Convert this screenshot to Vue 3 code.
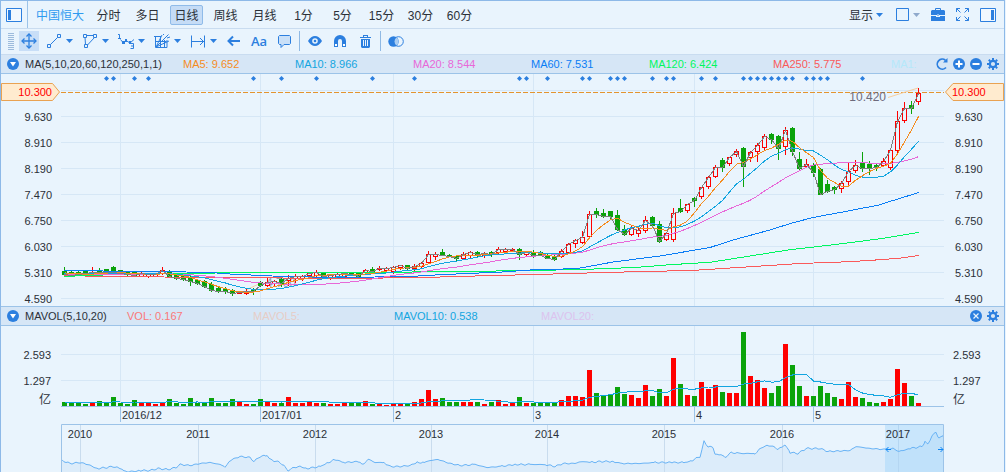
<script setup>
const periods = ['分时', '多日', '日线', '周线', '月线', '1分', '5分', '15分', '30分', '60分']
const activePeriod = '日线'

const averages = [
  { name: 'MA5', value: '9.652', tone: 'orange' },
  { name: 'MA10', value: '8.966', tone: 'cyan' },
  { name: 'MA20', value: '8.544', tone: 'pink' },
  { name: 'MA60', value: '7.531', tone: 'blue' },
  { name: 'MA120', value: '6.424', tone: 'green' },
  { name: 'MA250', value: '5.775', tone: 'red' },
  { name: 'MA1', value: '', tone: 'pale' }
]
const volumes = [
  { name: 'VOL', value: '0.167', tone: 'coral' },
  { name: 'MAVOL5', value: '', tone: 'sand' },
  { name: 'MAVOL10', value: '0.538', tone: 'cyan' },
  { name: 'MAVOL20', value: '', tone: 'lilac' }
]

const priceTicks = ['9.630', '8.910', '8.190', '7.470', '6.750', '6.030', '5.310', '4.590']
const volumeTicks = ['2.593', '1.297']
const months = ['2016/12', '2017/01', '2', '3', '4', '5']
const monthLines = [120, 260, 393, 533, 694, 813]
const years = [
  ['2010', 80], ['2011', 198], ['2012', 315], ['2013', 431],
  ['2014', 547], ['2015', 664], ['2016', 782], ['2017', 898]
].map(([label, x]) => ({ label, x, left: ((x - 61) / 883) * 100 + '%' }))

// direction, high, body top, body bottom, low, volume height
const rows = `
g 267 271 274 274 4|g 271 272 275 275 3|g 271 272 274 274 3|g 270 271 273 273 2|r 267 272 273 273 4
g 268 270 272 273 5|g 269 269 272 272 3|g 266 267 272 272 9|g 270 270 273 274 3|g 272 272 274 275 2
g 271 272 275 276 6|r 272 273 276 276 3|r 273 274 276 277 3|r 273 274 276 276 2|r 267 270 273 274 3
g 270 271 276 277 7|g 274 275 278 279 3|g 276 276 279 280 2|g 276 277 281 285 8|g 280 280 283 284 3
g 280 281 286 287 3|g 282 284 290 291 8|g 287 288 291 292 3|g 287 289 291 293 3|g 289 290 293 295 7
r 291 292 293 293 5|r 289 291 293 294 2|g 288 289 291 294 2|g 281 282 285 286 7|r 278 282 285 286 5
r 280 281 283 286 3|g 278 279 283 286 3|r 275 278 280 285 9|r 274 276 278 282 3|r 275 276 278 280 3
r 272 273 275 277 5|r 270 272 275 276 3|g 272 273 276 277 3|r 274 275 278 279 2|r 272 274 277 278 2
r 272 273 276 276 3|g 272 273 274 275 3|g 272 273 276 278 3|r 269 270 272 273 5|g 267 269 271 272 2
r 266 268 269 270 2|r 267 268 270 271 1|r 266 267 271 273 2|r 265 265 267 269 2|g 265 265 268 269 2
r 264 266 268 270 4|r 262 263 266 268 7|r 251 254 262 263 16|r 252 254 256 259 7|g 249 252 255 255 8
g 254 255 256 256 4|g 255 256 258 260 4|r 252 254 258 259 4|r 251 252 255 257 4|g 251 252 254 256 4
r 252 253 255 257 2|g 251 252 254 256 4|r 247 249 252 253 6|r 248 249 251 252 2|r 248 249 250 251 3
g 248 249 254 259 9|r 251 252 254 256 3|g 250 252 255 257 3|g 251 252 255 255 3|g 254 255 258 258 3
g 255 256 259 260 3|r 249 251 256 257 6|r 243 244 252 253 10|r 239 240 243 247 10|r 231 237 242 243 9
r 211 214 236 237 36|g 208 211 214 217 13|g 209 213 216 217 11|g 211 211 216 218 12|g 210 215 229 230 19
g 225 229 234 235 12|r 226 228 234 235 11|r 227 230 233 236 8|r 216 220 230 232 21|g 216 217 225 226 10
g 221 224 241 242 17|r 232 233 239 240 10|r 208 213 239 241 48|g 199 208 211 212 22|r 204 204 210 212 11
g 197 198 200 206 10|r 187 187 196 198 24|r 176 177 186 188 17|r 165 167 176 177 21|g 158 160 167 171 14
r 157 157 163 165 13|r 149 151 154 156 13|g 147 148 166 186 74|r 151 152 157 161 30|r 143 145 151 161 26
r 134 136 147 149 18|g 133 134 139 143 13|g 135 136 148 159 20|r 127 130 146 154 62|g 127 128 151 155 41
g 152 159 168 169 20|r 159 164 166 167 10|g 163 165 172 176 10|g 168 169 194 194 20|g 180 184 191 192 13
g 186 187 189 193 9|r 181 183 188 192 7|r 162 171 181 185 24|r 160 165 170 172 9|g 152 162 168 171 8
g 161 164 168 174 4|g 163 165 167 170 3|r 158 161 165 166 4|r 149 150 167 169 7|r 111 121 150 153 37
r 102 108 120 122 23|g 101 105 108 113 10|r 88 93 101 104 3`
const candles = rows.trim().split(/[|\n]/).map((row, i) => {
  const [dir, ...n] = row.split(' ')
  const [high, top, bottom, low, volume] = n.map(Number)
  const rise = dir === 'r'
  return { x: 62 + 7 * i, rise, high, top, bottom, low, volume, close: rise ? top : bottom }
})

function movingAverage(values, span, seed) {
  const padded = [...Array(span - 1).fill(seed), ...values]
  return values.map((_, i) => padded.slice(i, i + span).reduce((a, b) => a + b, 0) / span)
}
const line = (values) => values.map((v, i) => `${64.5 + 7 * i},${(v + 0.5).toFixed(1)}`).join(' ')

const closes = candles.map((c) => c.close)
const priceLines = [
  { tone: 'red', points: '64,275.5 104,276.5 223,277.5 340,278.5 410,277.7 453,276.7 488,275.6 530,274.7 607,272.4 650,271.4 693,270.4 800,263.5 847,261.8 873,260.2 900,258.2 919,255.5' },
  { tone: 'green', points: '64,276.4 117,274.5 170,273.3 292,272.5 393,272.2 463,271.5 530,270.5 578,269.6 635,267.5 670,264.7 710,262.3 750,256 790,249.7 833,244.8 883,238.4 919,232.4' },
  { tone: 'blue', points: '64,270.6 150,271.5 208,272.3 230,274 283,276.5 340,277.5 410,276.5 440,274.7 502,272 530,270 577,268.6 613,262 660,256 710,247.5 733,240 770,230 790,223.6 813,217.5 840,212.5 878,205.2 919,192.4' },
  { tone: 'pink', points: line(movingAverage(closes, 20, 274)) },
  { tone: 'cyan', points: line(movingAverage(closes, 10, 273)) },
  { tone: 'orange', points: line(movingAverage(closes, 5, 272)) },
  { tone: 'gray', points: line(closes) }
]
const volumeLine = line(movingAverage(candles.map((c) => c.volume), 10, 4).map((v) => 405.5 - v))

const events = [
  106, 113, 134, 148, 253, 281, 316, 372, 414, 519, 526, 547, 582, 589, 610, 617, 624, 652, 666, 673,
  701, 715, 743, 750, 757, 764, 771, 778, 785, 792, 806, 813, 820, 827, 862
]

const history = [
  [62, 460], [70, 463], [80, 462], [88, 464], [97, 468], [107, 467], [113, 466], [120, 468], [125, 471],
  [133, 471], [140, 470], [150, 470], [158, 468], [168, 469], [176, 467], [180, 464], [190, 465], [200, 463],
  [210, 462], [220, 464], [225, 466], [232, 459], [240, 456], [250, 457], [254, 461], [260, 456], [267, 455],
  [270, 459], [280, 462], [285, 466], [288, 470], [294, 467], [300, 466], [307, 468], [320, 466], [325, 464],
  [334, 459], [345, 462], [358, 461], [362, 464], [369, 459], [375, 462], [384, 462], [390, 466], [400, 466],
  [410, 465], [417, 462], [424, 462], [430, 460], [438, 459], [450, 463], [460, 465], [475, 464], [487, 467],
  [500, 466], [515, 464], [530, 464], [545, 464], [555, 466], [563, 463], [573, 463], [583, 461], [590, 462],
  [600, 461], [613, 461], [620, 463], [640, 463], [655, 462], [672, 462], [685, 462], [692, 460], [700, 456],
  [702, 449], [704, 441], [708, 446], [713, 447], [715, 454], [722, 454], [725, 457], [731, 452], [740, 453],
  [755, 453], [763, 446], [771, 445], [778, 449], [785, 444], [790, 452], [798, 453], [806, 448], [820, 448],
  [828, 451], [850, 450], [856, 446], [870, 448], [885, 449], [893, 448], [899, 451], [910, 448], [922, 446],
  [925, 441], [928, 444], [932, 435], [936, 432], [939, 438], [944, 434]
]
const historyPoints = []
history.slice(1).forEach(([x, y], i) => {
  const [px, py] = history[i]
  for (let t = px; t < x; t += 2) {
    const wobble = Math.sin(t * 2.3) * 0.5 + Math.sin(t * 0.9) * 0.4
    historyPoints.push(`${t},${(py + ((y - py) * (t - px)) / (x - px) + wobble + 0.5).toFixed(1)}`)
  }
})
historyPoints.push('944,434')
const historyLine = historyPoints.join(' ')
const historyArea = `62,472 ${historyLine} 944,472`
</script>

<template>
  <main class="terminal">
    <header class="top-bar">
      <button class="icon" aria-label="左侧面板">
        <svg width="16" height="14"><path d="M.5 .5h15v13H.5z" fill="#fff" fill-opacity=".4" stroke="#2c7fdf" /><path d="M2 2h3v10H2z" fill="#2c7fdf" /></svg>
      </button>
      <a class="stock" href="#">中国恒大</a>
      <nav class="periods">
        <button v-for="p in periods" :key="p" :class="{ active: p === activePeriod }">{{ p }}</button>
      </nav>
      <div class="top-right">
        <button class="display">显示<svg width="7" height="4"><path d="M0 0h7L3.500 4z" fill="#2c7fdf" /></svg></button>
        <button class="layout" aria-label="布局">
          <svg width="13" height="13"><path d="M.5 .5h12v12H.5z" fill="none" stroke="#2c7fdf" /></svg>
          <svg width="7" height="4"><path d="M0 0h7L3.500 4z" fill="#8fa9cc" /></svg>
        </button>
        <button class="icon" aria-label="工具箱">
          <svg width="14" height="13"><path d="M4.500 3V.5h5V3" fill="none" stroke="#2c7fdf" /><path d="M1 2h12l1 1v4H0V3zM0 8h5v1h4V8h5v5H0z" fill="#2c7fdf" /><path d="M6 6h2v3H6z" fill="#e9f4fd" /><path d="M6.500 6h1v2h-1z" fill="#2c7fdf" /></svg>
        </button>
        <button class="icon" aria-label="全屏">
          <svg width="13" height="13" fill="none" stroke="#2c7fdf"><path d="M4 .5H.5V4M.5 .5l4 4M9 .5h3.500V4M12.500 .5l-4 4M4 12.500H.5V9M.5 12.500l4-4M9 12.500h3.500V9M12.500 12.500l-4-4" /></svg>
        </button>
        <button class="icon" aria-label="右侧面板">
          <svg width="16" height="14"><path d="M.5 .5h15v13H.5z" fill="#fff" fill-opacity=".4" stroke="#2c7fdf" /><path d="M11 2h3v10h-3z" fill="#2c7fdf" /></svg>
        </button>
      </div>
    </header>

    <div class="tools">
      <span class="grip"></span>
      <button class="tool active" aria-label="移动">
        <svg width="16" height="16" fill="none" stroke="#2c7fdf"><path d="M8 1v14M1 8h14" stroke-width="1.300" /><path d="M5.500 3.500L8 1l2.500 2.500M5.500 12.500L8 15l2.500-2.500M3.500 5.500L1 8l2.500 2.500M12.500 5.500L15 8l-2.500 2.500" stroke-width="1.300" /></svg>
      </button>
      <div class="draw-tools">
        <button class="drop" aria-label="线段">
          <svg width="20" height="16" fill="none" stroke="#2c7fdf"><path d="M3.500 11.500h3v3h-3zM13.500 1.500h3v3h-3zM6.500 11.500l7-7" /></svg>
          <svg width="7" height="4"><path d="M0 0h7L3.500 4z" fill="#2c7fdf" /></svg>
        </button>
        <button class="drop" aria-label="图形">
          <svg width="20" height="16" fill="none" stroke="#2c7fdf"><path d="M3.500 1.500h3v3h-3zM13.500 1.500h3v3h-3zM4.500 11.500h3v3h-3zM6.500 2.500h7M5 4.500l.5 7M7.500 12l7-7.500" /></svg>
          <svg width="7" height="4"><path d="M0 0h7L3.500 4z" fill="#2c7fdf" /></svg>
        </button>
        <button class="drop" aria-label="波浪">
          <svg width="20" height="16" fill="none" stroke="#2c7fdf"><path d="M2 1.500h1.500V5M2 5.500h3M14.500 10.500h3v5h-3M15 13h2.500M4.500 6.500l2.500 3 3-2 4 2.500 4-3.500" /><path d="M6 8h3v3H6zM9 6h2v3H9zM13 8h2v3h-2z" fill="#2c7fdf" stroke="none" /></svg>
          <svg width="7" height="4"><path d="M0 0h7L3.500 4z" fill="#2c7fdf" /></svg>
        </button>
        <button class="drop" aria-label="江恩">
          <svg width="20" height="16" fill="none" stroke="#2c7fdf"><path d="M3.500 3v11.500h11.500V7M2 3.500h7M3.500 8.500h11M8.500 3v11M12.500 7v7M4 14L16.500 1.500M4 14l6-12M4 14l13-6M11 2l1-1M15 5l3-1" /></svg>
          <svg width="7" height="4"><path d="M0 0h7L3.500 4z" fill="#2c7fdf" /></svg>
        </button>
        <button class="drop" aria-label="测量">
          <svg width="20" height="16" fill="none" stroke="#2c7fdf"><path d="M3.500 2.500v12M16.500 2.500v12M4 8.500h12M12 5l3.500 3.500L12 12" /></svg>
          <svg width="7" height="4"><path d="M0 0h7L3.500 4z" fill="#2c7fdf" /></svg>
        </button>
        <button class="tool" aria-label="箭头">
          <svg width="14" height="12" fill="none" stroke="#2c7fdf" stroke-width="2"><path d="M13 6H2M6 1.500L1.500 6 6 10.500" /></svg>
        </button>
      </div>
      <button class="tool text">Aa</button>
      <button class="tool" aria-label="批注">
        <svg width="13" height="13"><path d="M1.500 .5h10l1 1v7l-1 1H6l-3 3v-3H1.500l-1-1v-7z" fill="#c9e0f8" stroke="#2c7fdf" /></svg>
      </button>
      <i class="divider"></i>
      <button class="tool" aria-label="可见">
        <svg width="14" height="10"><path d="M0 5Q3 0 7 0t7 5q-3 5-7 5T0 5z" fill="#2c7fdf" /><circle cx="7" cy="5" r="2.800" fill="#e9f4fd" /><circle cx="7" cy="5" r="1.300" fill="#2c7fdf" /></svg>
      </button>
      <button class="tool" aria-label="磁吸">
        <svg width="12" height="12"><path d="M2 12V6a4 4 0 0 1 8 0v6" fill="none" stroke="#2c7fdf" stroke-width="4" /><path d="M1 9h2v2H1zM9 9h2v2H9z" fill="#fff" /></svg>
      </button>
      <button class="tool" aria-label="删除">
        <svg width="11" height="13"><path d="M0 2h11v1H0zM3 0h5v2H7V1H4v1H3zM1 4h9v8l-1 1H2l-1-1z" fill="#2c7fdf" /><path d="M3.500 5v6M5.500 5v6M7.500 5v6" stroke="#e9f4fd" /></svg>
      </button>
      <i class="divider"></i>
      <button class="tool" aria-label="对比">
        <svg width="16" height="11"><circle cx="10.500" cy="5.500" r="4.800" fill="none" stroke="#2c7fdf" /><circle cx="5.500" cy="5.500" r="5.200" fill="#2c7fdf" /><path d="M8.500 1.500a5 5 0 0 0 0 8a5 5 0 0 0 0-8" fill="#a9cdf3" /></svg>
      </button>
    </div>

    <section class="indicator price-head">
      <button class="fold" aria-label="折叠">
        <svg width="12" height="12"><circle cx="6" cy="6" r="6" fill="#2c7fdf" /><path d="M3 4h6L6 8.500z" fill="#fff" /></svg>
      </button>
      <h2>MA(5,10,20,60,120,250,1,1)</h2>
      <span v-for="a in averages" :key="a.name" :class="a.tone">{{ a.name }}: {{ a.value }}</span>
      <div class="actions">
        <button aria-label="刷新"><svg width="12" height="12"><path d="M10 9.500A5 5 0 1 1 9.500 2.300" fill="none" stroke="#2c7fdf" stroke-width="1.700" /><path d="M7 4.500h4.500V0z" fill="#2c7fdf" /></svg></button>
        <button aria-label="放大"><svg width="12" height="12"><circle cx="6" cy="6" r="6" fill="#2c7fdf" /><path d="M6 2.500v7M2.500 6h7" stroke="#fff" stroke-width="2" /></svg></button>
        <button aria-label="缩小"><svg width="12" height="12"><circle cx="6" cy="6" r="6" fill="#2c7fdf" /><path d="M2.500 6h7" stroke="#fff" stroke-width="2" /></svg></button>
        <button aria-label="设置"><svg width="12" height="12" fill="none" stroke="#2c7fdf"><circle cx="6" cy="6" r="3.200" stroke-width="2.200" /><path d="M6 0v2M6 10v2M0 6h2M10 6h2M1.800 1.800l1.400 1.400M8.800 8.800l1.400 1.400M1.800 10.200l1.400-1.400M8.800 3.200l1.400-1.400" stroke-width="2" /></svg></button>
      </div>
    </section>

    <section class="chart">
      <div class="axis left prices">
        <div class="tag">
          <svg viewBox="0 0 60 18"><path d="M.5 .5h51l7 8.500-7 8.500H.5z" fill="#ffebcf" stroke="#e9a252" /></svg>
          <span>10.300</span>
        </div>
        <span v-for="t in priceTicks" :key="t">{{ t }}</span>
      </div>
      <div class="plot price">
        <span class="mark low">4.700</span>
        <svg viewBox="61 74 883 232" preserveAspectRatio="none">
          <g class="grid">
            <path v-for="n in 9" :key="n" :d="`M61 ${64.5 + 26 * n}H944`" />
            <path v-for="x in monthLines" :key="x" :d="`M${x + 0.5} 74V306`" />
          </g>
          <path v-for="x in events" :key="x" :d="`M${x + 0.5} 76l2.500 2.500-2.500 2.500-2.500-2.500z`" fill="#2c7fdf" />
          <path d="M61 92.500H944" stroke="#e3942f" stroke-dasharray="5 2" class="crisp" />
          <path d="M888 97.500L918 88M247 289.500L261 283" stroke="#f6cf9f" fill="none" />
          <g v-for="c in candles" :key="c.x" class="crisp">
            <template v-if="c.rise">
              <path :d="`M${c.x + 2.5} ${c.high}V${c.top}M${c.x + 2.5} ${c.bottom}V${c.low + 1}`" stroke="#f00" />
              <path :d="`M${c.x + 0.5} ${c.top + 0.5}h4V${c.bottom + 0.5}h-4z`" fill="#e9f4fd" stroke="#f00" />
            </template>
            <template v-else>
              <path :d="`M${c.x + 2.5} ${c.high}V${c.low + 1}`" stroke="#0ba30b" />
              <path :d="`M${c.x} ${c.top}h5V${c.bottom + 1}h-5z`" fill="#0ba30b" />
            </template>
          </g>
          <polyline v-for="l in priceLines" :key="l.tone" :points="l.points" class="trend" :class="l.tone" />
        </svg>
        <span class="mark peak">10.420</span>
      </div>
      <div class="axis right prices">
        <div class="tag">
          <svg viewBox="0 0 60 18"><path d="M59.500 .5H9L1.500 9 9 17.500h50.500z" fill="#ffebcf" stroke="#e9a252" /></svg>
          <span>10.300</span>
        </div>
        <span v-for="t in priceTicks" :key="t">{{ t }}</span>
      </div>
    </section>

    <section class="indicator volume-head">
      <button class="fold" aria-label="折叠">
        <svg width="12" height="12"><circle cx="6" cy="6" r="6" fill="#2c7fdf" /><path d="M3 4h6L6 8.500z" fill="#fff" /></svg>
      </button>
      <h2>MAVOL(5,10,20)</h2>
      <span v-for="v in volumes" :key="v.name" :class="v.tone">{{ v.name }}: {{ v.value }}</span>
      <div class="actions">
        <button aria-label="关闭"><svg width="12" height="12"><circle cx="6" cy="6" r="6" fill="#2c7fdf" /><path d="M3.500 3.500l5 5M8.500 3.500l-5 5" stroke="#e9f4fd" stroke-width="1.200" /></svg></button>
        <button aria-label="设置"><svg width="12" height="12" fill="none" stroke="#2c7fdf"><circle cx="6" cy="6" r="3.200" stroke-width="2.200" /><path d="M6 0v2M6 10v2M0 6h2M10 6h2M1.800 1.800l1.400 1.400M8.800 8.800l1.400 1.400M1.800 10.200l1.400-1.400M8.800 3.200l1.400-1.400" stroke-width="2" /></svg></button>
      </div>
    </section>

    <section class="chart">
      <div class="axis left volume">
        <span v-for="t in volumeTicks" :key="t">{{ t }}</span>
        <span class="unit">亿</span>
      </div>
      <div class="plot">
        <svg class="bars" viewBox="61 326 883 81" preserveAspectRatio="none">
          <g class="grid">
            <path d="M61 354.500H944M61 380.500H944" />
            <path v-for="x in monthLines" :key="x" :d="`M${x + 0.5} 326V406`" />
          </g>
          <rect v-for="c in candles" :key="c.x" :x="c.x" :y="406 - c.volume" width="5" :height="c.volume" :fill="c.rise ? '#f00' : '#0ba30b'" />
          <polyline :points="volumeLine" class="trend cyan" />
          <path d="M61 406.500H944" stroke="#9cc3e8" />
        </svg>
        <div class="months">
          <span v-for="m in months" :key="m">{{ m }}</span>
        </div>
        <div class="navigator">
          <svg viewBox="61 424 883 48" preserveAspectRatio="none">
            <polygon :points="historyArea" fill="#dcecfa" />
            <path v-for="y in years" :key="y.x" :d="`M${y.x + 0.5} 425V472`" stroke="#c9dcee" />
            <rect x="885" y="425" width="59" height="47" fill="#8fccfa" fill-opacity=".36" />
            <polyline :points="historyLine" fill="none" stroke="#69b3f5" />
            <path d="M61.500 472V424.500H943.500V472" fill="none" stroke="#9cc3e8" />
            <path d="M891 449.500h-5M888.500 447l-2.500 2.500 2.500 2.500M938 449.500h5M940.500 447l2.500 2.500-2.500 2.500" fill="none" stroke="#1087f5" />
          </svg>
          <span v-for="y in years" :key="y.label" :style="{ left: y.left }">{{ y.label }}</span>
        </div>
      </div>
      <div class="axis right volume">
        <span v-for="t in volumeTicks" :key="t">{{ t }}</span>
        <span class="unit">亿</span>
      </div>
    </section>
  </main>
</template>

<style>
body {
  background: #e9f4fd;
}
</style>

<style scoped>
.terminal {
  margin-right: 1px;
  border: 1px solid #8db9e8;
  border-bottom: 0;
  background: #e9f4fd;
  color: #2b3038;
  font-family: "Liberation Sans", "Noto Sans CJK SC", sans-serif;
  font-size: 11px;
  overflow: hidden;
}
button {
  display: flex;
  align-items: center;
  justify-content: center;
  margin: 0;
  padding: 0;
  border: 0;
  background: none;
  color: inherit;
  font: inherit;
}
svg {
  display: block;
}
.top-bar {
  display: flex;
  height: 27px;
  align-items: center;
  padding: 0 8px 0 5px;
  border-bottom: 1px solid #c9dcf0;
  font-size: 12px;
}
.stock {
  display: flex;
  height: 27px;
  align-items: center;
  margin-left: 5px;
  padding: 0 8px;
  border-left: 1px solid #9cc3e8;
  color: #2f9af0;
  text-decoration: none;
}
.periods {
  display: flex;
  gap: 6px;
}
.periods button {
  box-sizing: border-box;
  width: 33px;
  height: 20px;
  border: 1px solid transparent;
  border-radius: 2px;
}
.periods .active {
  border-color: #8fbbe9;
  background: #c5dcf6;
}
.top-right {
  display: flex;
  align-items: center;
  gap: 11px;
  margin-left: auto;
}
.display {
  gap: 3px;
  margin-right: 2px;
}
.layout {
  gap: 4px;
}
.tools {
  display: flex;
  height: 24px;
  align-items: center;
  gap: 5px;
  padding: 0 0 1px 7px;
}
.grip {
  width: 6px;
  height: 17px;
  background: repeating-linear-gradient(#9dbbdc 0 1px, transparent 1px 2px);
}
.draw-tools {
  display: flex;
  gap: 4px;
}
.tool {
  width: 20px;
  height: 20px;
}
.tool.active {
  background: #c8def7;
}
.drop {
  width: 32px;
  height: 20px;
  justify-content: flex-start;
  gap: 2px;
}
.tool.text {
  color: #2c7fdf;
  font-family: "Open Sans", sans-serif;
  font-size: 13px;
  font-weight: 600;
}
.divider {
  width: 1px;
  height: 20px;
  background: #8fb9e4;
}
.indicator {
  display: grid;
  height: 18px;
  align-items: center;
  padding: 0 5px 0 6px;
  border-top: 1px solid #c9dcf0;
  border-bottom: 1px solid #9cc3e8;
  background: #d6e6f6;
}
.price-head {
  grid-template-columns: 18px 158px 112px 118px 118px 118px 124px 118px 40px 1fr;
}
.volume-head {
  grid-template-columns: 18px 102px 126px 141px 147px 80px 1fr;
  border-top-color: #9cc3e8;
}
.fold {
  justify-self: start;
}
.indicator h2 {
  margin: 0;
  font-size: 11px;
  font-weight: normal;
}
.actions {
  display: flex;
  justify-content: flex-end;
  gap: 5px;
}
.chart {
  display: grid;
  grid-template-columns: 60px 1fr 60px;
}
.axis {
  display: flex;
  flex-direction: column;
  padding-top: 9px;
  line-height: 26px;
}
.axis.prices {
  margin-bottom: -6px;
}
.axis.volume {
  padding-top: 16px;
}
.axis.left > span {
  padding-right: 9px;
  text-align: right;
}
.axis.right > span {
  padding-left: 11px;
}
.axis.volume > span {
  padding-right: 10px;
  padding-left: 9px;
}
.axis.volume .unit {
  font-size: 12px;
  line-height: 12px;
}
.tag {
  display: grid;
  height: 18px;
  margin-bottom: 3px;
  color: #f00;
  line-height: 18px;
}
.tag > * {
  grid-area: 1 / 1;
}
.tag svg {
  width: 60px;
  height: 18px;
}
.left .tag span {
  padding-right: 9px;
  text-align: right;
}
.right .tag span {
  padding-left: 8px;
}
.plot {
  position: relative;
}
.plot svg {
  position: relative;
  width: 100%;
}
.price svg {
  height: 232px;
}
.bars {
  height: 81px;
}
.mark {
  position: absolute;
  color: #6d6a7c;
  font-size: 12px;
  line-height: 14px;
}
.peak {
  top: 16px;
  right: 58px;
}
.low {
  top: 202px;
  left: calc(100% * 205 / 883);
  color: #9a98ab;
}
.grid {
  stroke: #d6e7f6;
  shape-rendering: crispEdges;
}
.crisp {
  shape-rendering: crispEdges;
}
.trend {
  fill: none;
  stroke: currentColor;
  shape-rendering: crispEdges;
}
.months {
  display: grid;
  grid-template-columns: 140fr 133fr 140fr 161fr 119fr 131fr;
  height: 17px;
  padding-left: calc(100% * 59 / 883);
}
.months span {
  height: 15px;
  padding-left: 1px;
  border-left: 1px solid #9cc3e8;
  line-height: 16px;
}
.navigator {
  position: relative;
}
.navigator svg {
  height: 48px;
}
.navigator span {
  position: absolute;
  top: 4px;
  line-height: 13px;
  transform: translateX(-50%);
}
.orange { color: #f58c1e; }
.cyan { color: #12a5e0; }
.pink { color: #e868d8; }
.blue { color: #0a7df5; }
.green { color: #00f760; }
.red { color: #fa5a5a; }
.pale { color: #b5e8fa; }
.coral { color: #fa7878; }
.sand { color: #e6cdc6; }
.lilac { color: #dcc3ee; }
.gray { color: #808080; }
</style>
